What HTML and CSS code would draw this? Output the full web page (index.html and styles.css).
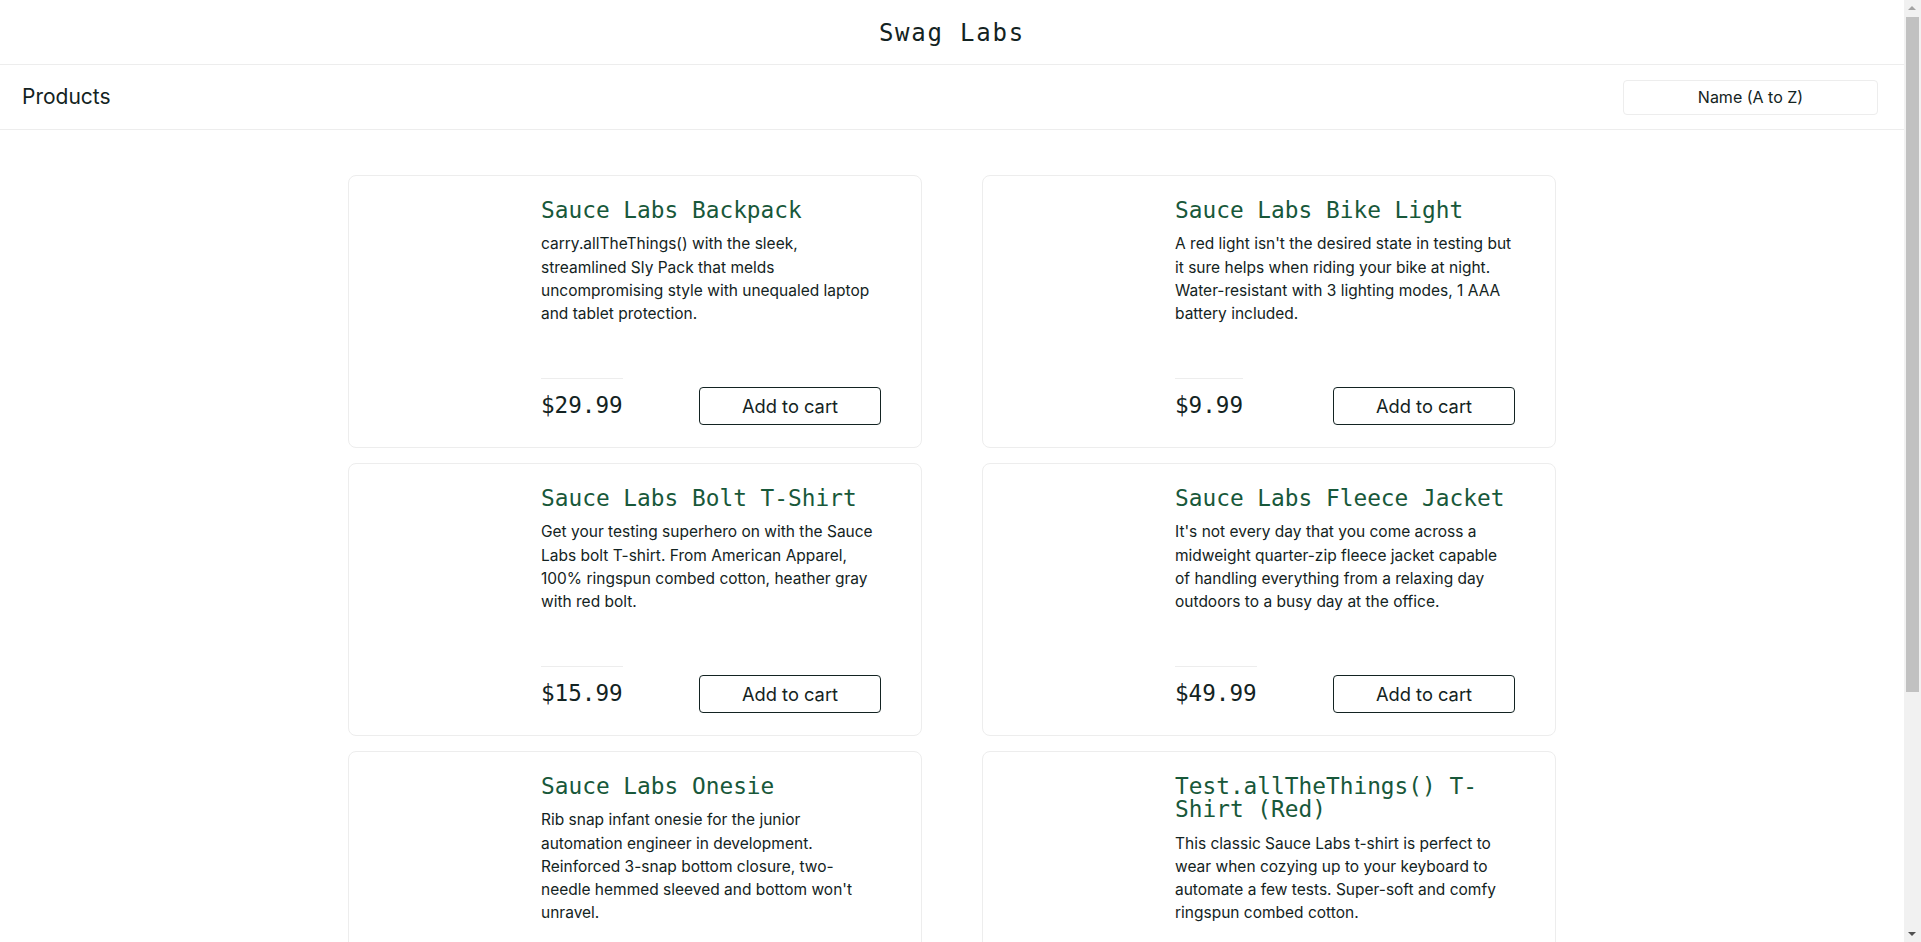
FILE: index.html
```html
<!DOCTYPE html>
<html lang="en">
<head>
<meta charset="utf-8">
<title>Swag Labs</title>
<link rel="stylesheet" href="styles.css">
</head>
<body>
<div class="page">
  <header class="app-header">
    <div class="app-logo">Swag Labs</div>
  </header>
  <div class="subheader">
    <span class="page-title">Products</span>
    <div class="sort">Name (A to Z)</div>
  </div>
  <main class="inventory">
    <div class="item">
      <div class="item-img"></div>
      <div class="item-body">
        <div class="item-name">Sauce Labs Backpack</div>
        <div class="item-desc">carry.allTheThings() with the sleek, streamlined Sly Pack that melds uncompromising style with unequaled laptop and tablet protection.</div>
        <div class="pricebar">
          <div class="price">$29.99</div>
          <button class="btn">Add to cart</button>
        </div>
      </div>
    </div>
    <div class="item">
      <div class="item-img"></div>
      <div class="item-body">
        <div class="item-name">Sauce Labs Bike Light</div>
        <div class="item-desc">A red light isn't the desired state in testing but it sure helps when riding your bike at night. Water-resistant with 3 lighting modes, 1 AAA battery included.</div>
        <div class="pricebar">
          <div class="price">$9.99</div>
          <button class="btn">Add to cart</button>
        </div>
      </div>
    </div>
    <div class="item">
      <div class="item-img"></div>
      <div class="item-body">
        <div class="item-name">Sauce Labs Bolt T-Shirt</div>
        <div class="item-desc">Get your testing superhero on with the Sauce Labs bolt T-shirt. From American Apparel, 100% ringspun combed cotton, heather gray with red bolt.</div>
        <div class="pricebar">
          <div class="price">$15.99</div>
          <button class="btn">Add to cart</button>
        </div>
      </div>
    </div>
    <div class="item">
      <div class="item-img"></div>
      <div class="item-body">
        <div class="item-name">Sauce Labs Fleece Jacket</div>
        <div class="item-desc">It's not every day that you come across a midweight quarter-zip fleece jacket capable of handling everything from a relaxing day outdoors to a busy day at the office.</div>
        <div class="pricebar">
          <div class="price">$49.99</div>
          <button class="btn">Add to cart</button>
        </div>
      </div>
    </div>
    <div class="item">
      <div class="item-img"></div>
      <div class="item-body">
        <div class="item-name">Sauce Labs Onesie</div>
        <div class="item-desc">Rib snap infant onesie for the junior automation engineer in development. Reinforced 3-snap bottom closure, two-needle hemmed sleeved and bottom won't unravel.</div>
        <div class="pricebar">
          <div class="price">$7.99</div>
          <button class="btn">Add to cart</button>
        </div>
      </div>
    </div>
    <div class="item">
      <div class="item-img"></div>
      <div class="item-body">
        <div class="item-name">Test.allTheThings() T-Shirt (Red)</div>
        <div class="item-desc">This classic Sauce Labs t-shirt is perfect to wear when cozying up to your keyboard to automate a few tests. Super-soft and comfy ringspun combed cotton.</div>
        <div class="pricebar">
          <div class="price">$15.99</div>
          <button class="btn">Add to cart</button>
        </div>
      </div>
    </div>
  </main>
  <footer class="footer">
    <div class="footer-copy">© 2024 Sauce Labs. All Rights Reserved. Terms of Service | Privacy Policy</div>
  </footer>
</div>
<div class="scrollbar" aria-hidden="true">
  <div class="sb-arrow sb-up"></div>
  <div class="sb-thumb"></div>
  <div class="sb-arrow sb-down"></div>
</div>
</body>
</html>
```
FILE: styles.css
```css
* { box-sizing: border-box; }
html, body { margin: 0; padding: 0; background: #fff; }
body {
  font-family: "Inter", "DejaVu Sans", sans-serif;
  color: #132322;
}
.page { margin-right: 17px; display: flex; flex-direction: column; }

.app-header {
  height: 65px;
  border-bottom: 1px solid #ededed;
  display: flex;
  align-items: center;
  justify-content: center;
}
.app-logo {
  font-family: "DejaVu Sans Mono", monospace;
  font-size: 24px;
  line-height: 24px;
  letter-spacing: 1.8px;
  color: #132322;
  padding-top: 1px;
}

.subheader {
  height: 65px;
  border-bottom: 1px solid #ededed;
  display: flex;
  align-items: center;
  justify-content: space-between;
  padding: 0 26px 0 22px;
}
.page-title { font-size: 21px; line-height: 24px; color: #132322; }
.sort {
  width: 255px;
  height: 35px;
  border: 1px solid #ededed;
  border-radius: 4px;
  display: flex;
  align-items: center;
  justify-content: center;
  font-size: 16px;
  color: #132322;
}

.inventory {
  width: 1208px;
  margin: 45px auto 0;
  display: grid;
  grid-template-columns: 574px 574px;
  column-gap: 60px;
  row-gap: 15px;
}
.item {
  display: flex;
  gap: 20px;
  min-height: 273px;
  padding: 20px 15px 22px 20px;
  border: 1px solid #ededed;
  border-radius: 8px;
  background: #fff;
}
.item-img { width: 152px; flex: none; }
.item-body {
  width: 344px;
  display: flex;
  flex-direction: column;
}
.item-name {
  font-family: "DejaVu Sans Mono", monospace;
  font-size: 22.8px;
  line-height: 23.3px;
  color: #18583a;
  padding-top: 3px;
  width: 341px;
}
.item-desc {
  font-size: 15.5px;
  line-height: 23.3px;
  color: #132322;
  margin-top: 10px;
  width: 341px;
}
.pricebar {
  margin-top: auto;
  padding-top: 20px;
  padding-right: 4px;
  display: flex;
  justify-content: space-between;
  align-items: flex-end;
}
.price {
  font-family: "DejaVu Sans Mono", monospace;
  font-size: 22.6px;
  font-weight: 500;
  line-height: 24px;
  color: #132322;
  border-top: 1px solid #ededed;
  padding-top: 14px;
  margin-bottom: 8px;
}
.btn {
  width: 182px;
  height: 38px;
  border: 1px solid #132322;
  border-radius: 4px;
  background: #fff;
  font-family: "Inter", "DejaVu Sans", sans-serif;
  font-size: 18.3px;
  color: #132322;
  padding: 0;
}

.footer {
  margin-top: 60px;
  background: #132322;
  color: #fff;
  padding: 30px 20px;
  text-align: center;
  font-size: 14px;
}

.scrollbar {
  position: fixed;
  top: 0;
  right: 0;
  width: 17px;
  height: 100vh;
  background: #f1f1f1;
  display: flex;
  flex-direction: column;
  align-items: center;
}
.sb-arrow { width: 17px; height: 17px; flex: none; position: relative; }
.sb-arrow::after {
  content: "";
  position: absolute;
  left: 4px;
  border-left: 4.5px solid transparent;
  border-right: 4.5px solid transparent;
}
.sb-up::after { top: 6px; border-bottom: 4px solid #a3a3a3; }
.sb-down::after { top: 7px; border-top: 4px solid #505050; }
.sb-thumb {
  width: 13px;
  height: 675px;
  background: #c1c1c1;
  flex: none;
}
.sb-down { margin-top: auto; }
```
